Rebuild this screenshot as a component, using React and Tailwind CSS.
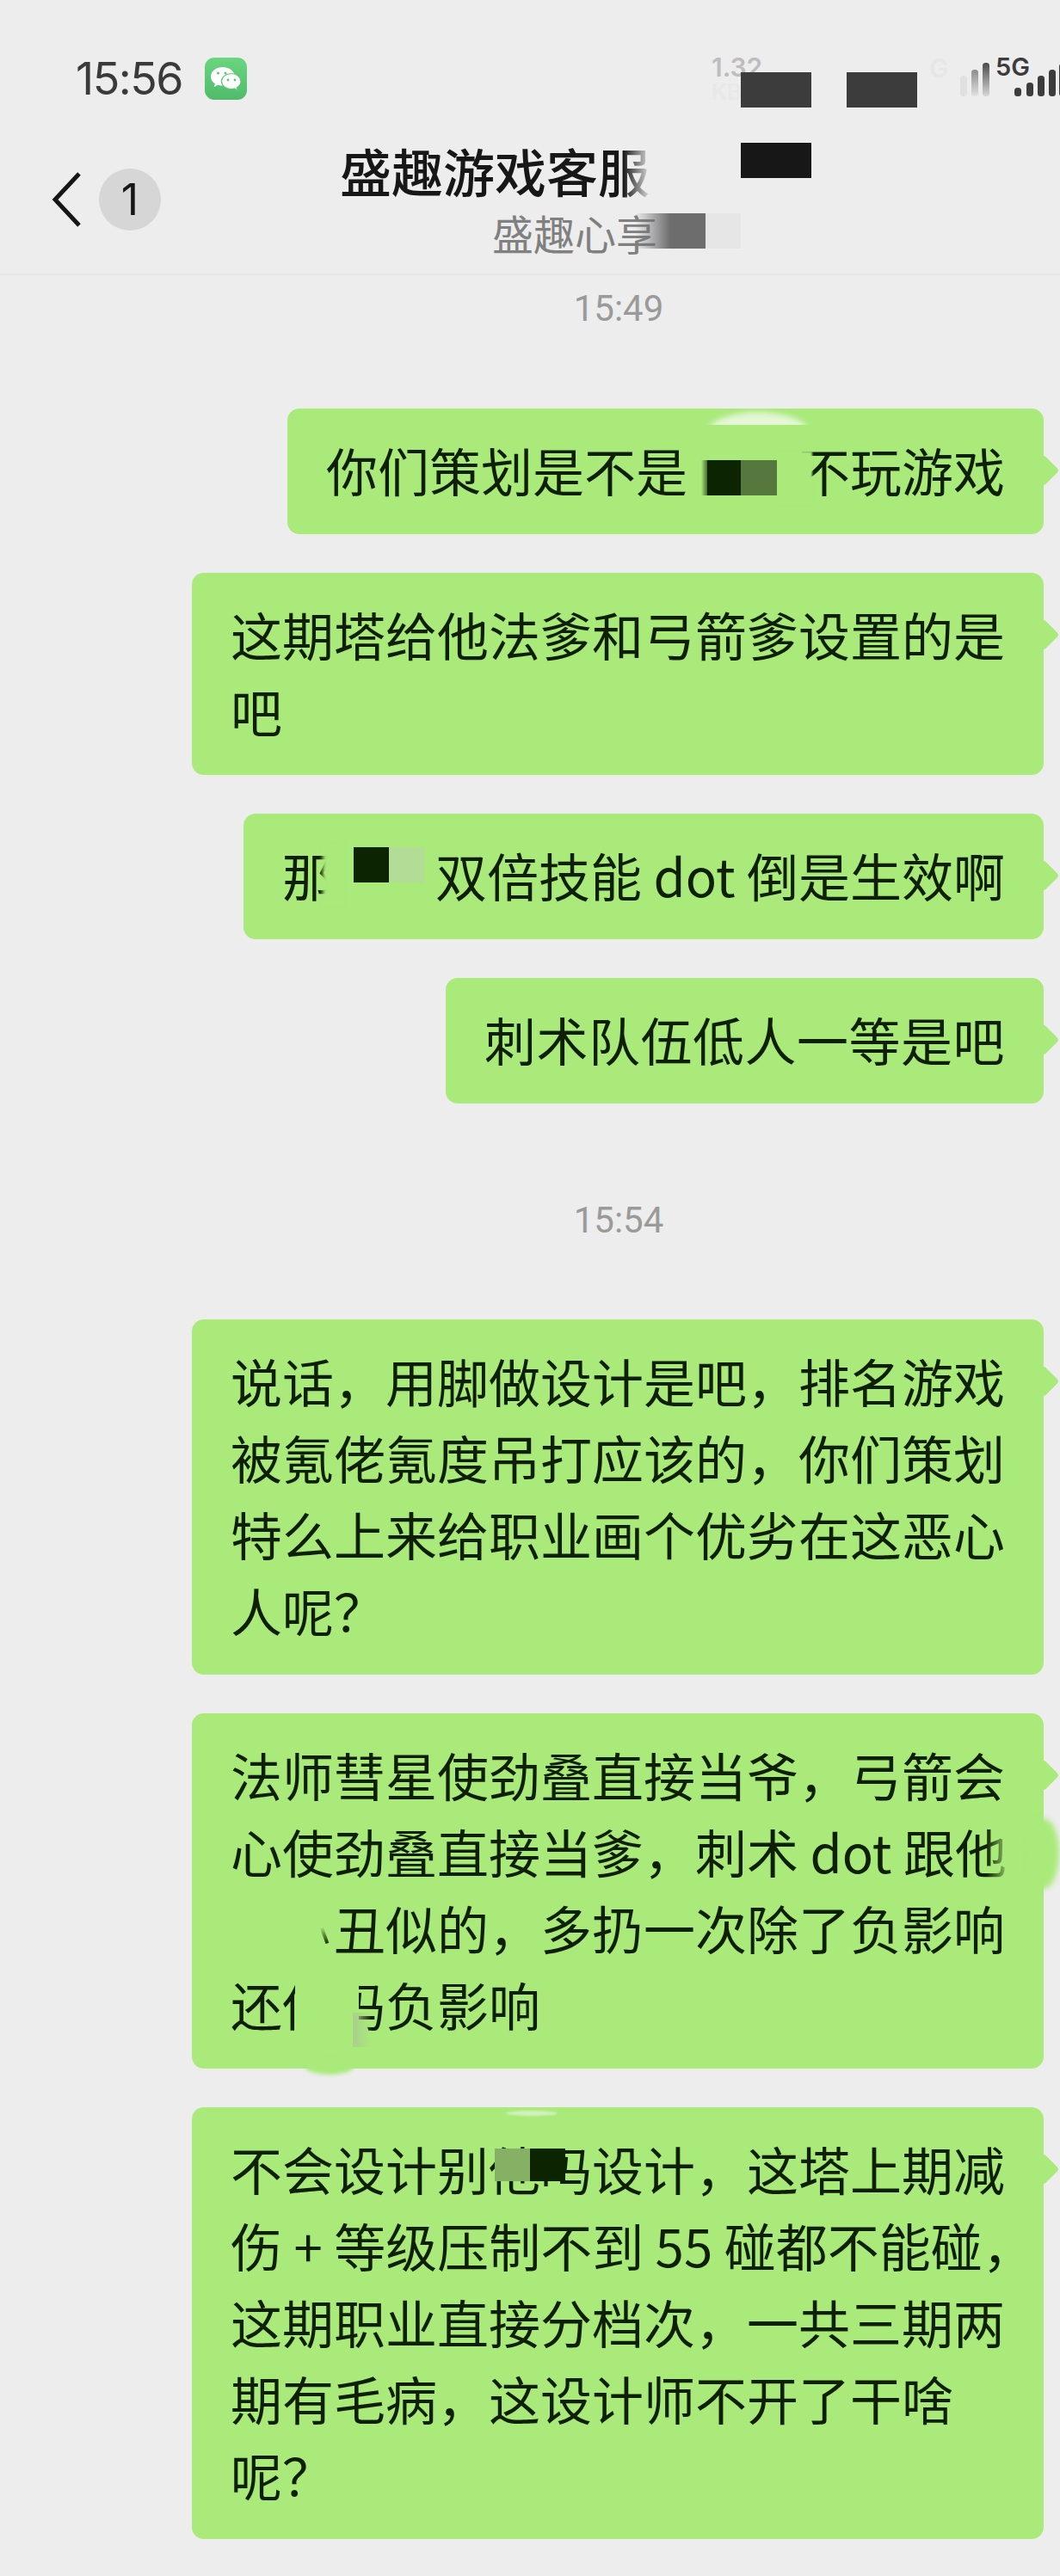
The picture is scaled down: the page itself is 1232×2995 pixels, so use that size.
import React from "react";

function Tail() {
  return <span className="absolute right-[-13px] top-[59px] w-[26px] h-[26px] rotate-45 rounded-[4px] bg-[#a9ea7a]" />;
}

function Bubble({ className = "", lines, children }) {
  return (
    <div className={"relative rounded-[14px] bg-[#a9ea7a] pt-[25.500px] pb-[31.500px] px-[45px] text-[60px] leading-[89px] text-[#0f1f02] " + className}>
      {lines.map((l, i) => (
        <div key={i} className="whitespace-nowrap">{l}</div>
      ))}
      {children}
      <Tail />
    </div>
  );
}

function Stamp({ className = "", children }) {
  return (
    <div className={"h-[60px] flex items-center justify-center pl-[206px] font-['Roboto',sans-serif] text-[42px] text-[#9a9a9a] " + className}>
      {children}
    </div>
  );
}

function WeChatIcon() {
  return (
    <div className="w-[49px] h-[49px] rounded-[11px] bg-gradient-to-b from-[#69d67f] to-[#50bb6b] ml-[26px] mt-[-2px]">
      <svg viewBox="0 0 49 49" className="w-[49px] h-[49px]">
        <path d="M21 11c-7.700 0-14 4.800-14 11 0 3.400 1.900 6.300 4.900 8.300l-1.200 3.900 4.500-2.500c1.800.5 3.700.8 5.800.8 7.700 0 14-4.800 14-10.500S28.700 11 21 11z" fill="#ffffff" />
        <path d="M31 18.500c-6.300 0-11.500 4-11.500 9s5.200 9 11.500 9c1.300 0 2.500-.2 3.600-.5l3.600 2-.9-3.200c2.900-1.600 4.700-4.300 4.700-7.300 0-5-5.200-9-11-9z" fill="#ffffff" stroke="#5cc875" strokeWidth="1.200" />
        <circle cx="15.500" cy="18" r="1.500" fill="#5cc875" />
        <circle cx="24" cy="18" r="1.500" fill="#5cc875" />
        <circle cx="27" cy="26" r="1.400" fill="#5cc875" />
        <circle cx="35" cy="26" r="1.400" fill="#5cc875" />
      </svg>
    </div>
  );
}

function Signal() {
  return (
    <svg viewBox="0 0 116 44" className="w-[116px] h-[44px] absolute left-[1116px] top-[70px]">
      <defs>
        <linearGradient id="fadeDown" x1="0" x2="0" y1="0" y2="1">
          <stop offset="0" stopColor="#4a4a4a" />
          <stop offset="1" stopColor="#d8d8d8" />
        </linearGradient>
        <linearGradient id="fadeMid" x1="0" x2="0" y1="0" y2="1">
          <stop offset="0" stopColor="#8c8c8c" />
          <stop offset="1" stopColor="#e2e2e2" />
        </linearGradient>
      </defs>
      <rect x="0" y="18" width="8" height="24" rx="3.500" fill="#e0e0e0" />
      <rect x="13" y="11" width="8" height="31" rx="3.500" fill="url(#fadeMid)" />
      <rect x="26" y="3" width="8" height="39" rx="3.500" fill="url(#fadeDown)" />
      <rect x="63" y="32" width="8" height="10" rx="3.500" fill="#3c3c3c" />
      <rect x="77" y="26" width="8" height="16" rx="3.500" fill="#3c3c3c" />
      <rect x="90" y="18" width="8" height="24" rx="3.500" fill="#3c3c3c" />
      <rect x="103" y="11" width="8" height="31" rx="3.500" fill="#3c3c3c" />
      <rect x="115" y="4" width="8" height="38" rx="3.500" fill="#3c3c3c" />
    </svg>
  );
}

function Header() {
  return (
    <div className="relative h-[320px] border-b-2 border-[#e6e6e6]">
      <div className="flex items-center pl-[88px] pt-[66px] h-[118px]">
        <span className="font-['Inter',sans-serif] text-[52px] leading-[52px] text-[#3a3a3a] tracking-[-1.500px]">15:56</span>
        <WeChatIcon />
      </div>
      <div className="flex items-start">
        <div className="flex items-center mt-[78px] pl-[58px]">
          <svg viewBox="0 0 40 66" className="w-[40px] h-[66px]">
            <path d="M34 3 L6 33 L34 63" fill="none" stroke="#161616" strokeWidth="5" />
          </svg>
          <div className="w-[72px] h-[72px] ml-[17px] rounded-full bg-[#d6d6d6] flex items-center justify-center font-['Inter',sans-serif] text-[50px] text-[#161616]">1</div>
        </div>
        <div className="ml-[208px] mt-[45px] flex flex-col">
          <div className="text-[60px] leading-[70px] font-medium text-[#171717]">盛趣游戏客服</div>
          <div className="pl-[177px] mt-[9px] text-[48px] leading-[56px] text-[#808080] whitespace-nowrap">盛趣心享</div>
        </div>
      </div>

      {/* privacy mosaic laid over the header */}
      <span className="absolute left-[724px] top-[165px] w-[34px] h-[68px] bg-gradient-to-r from-[#ededed00] to-[#ededed]" />
      <span className="absolute left-[738px] top-[248px] w-[82px] h-[41px] bg-gradient-to-r from-[#ededed00] via-[#6d6d6d] to-[#6d6d6d]" />
      <span className="absolute left-[820px] top-[248px] w-[41px] h-[41px] bg-[#e6e6e6]" />
      <span className="absolute left-[827px] top-[60px] font-['Inter',sans-serif] text-[30px] leading-[36px] font-semibold text-[#bdbdbd]">1.32</span>
      <span className="absolute left-[827px] top-[92px] font-['Inter',sans-serif] text-[26px] leading-[30px] font-semibold text-[#e8e8e8]">KB/s</span>
      <span className="absolute left-[861px] top-[84px] w-[82px] h-[41px] bg-[#3c3c3c]" />
      <span className="absolute left-[984px] top-[84px] w-[82px] h-[41px] bg-[#3c3c3c]" />
      <span className="absolute left-[861px] top-[166px] w-[82px] h-[41px] bg-[#171717]" />
      <span className="absolute left-[1080px] top-[61px] font-['Inter',sans-serif] text-[30px] leading-[36px] font-semibold text-[#e6e6e6]">G</span>
      <span className="absolute left-[1157px] top-[60px] font-['Inter',sans-serif] text-[29px] leading-[36px] font-semibold text-[#3c3c3c]">5G</span>
      <Signal />
    </div>
  );
}

export default function App() {
  return (
    <div className="w-[1232px] h-[2995px] overflow-hidden bg-[#ededed] flex flex-col font-['Noto_Sans_CJK_SC','Noto_Sans',sans-serif]">
      <Header />
      <Stamp className="mt-[8px] mb-[87px]">15:49</Stamp>

      <div className="flex flex-col items-end gap-[45px] pr-[19px]">
        <Bubble lines={[<>你们策划是不是<span className="inline-block w-[129px]" />不玩游戏</>]}>
          <span className="absolute left-[478px] top-0 w-[138px] h-[19px] overflow-hidden">
            <span className="block w-[120px] h-[50px] ml-[9px] mt-[4px] rounded-[50%] bg-[#e4f6d6] blur-[3px]" />
          </span>
          <span className="absolute left-[568px] top-[50px] w-[42px] h-[62px] bg-[#a9ea7a] blur-[1px]" />
          <span className="absolute left-[481px] top-[60px] w-[7px] h-[41px] bg-gradient-to-r from-[#a9ea7a] to-[#4c6c30]" />
          <span className="absolute left-[488px] top-[60px] w-[39px] h-[41px] bg-[#0d2400]" />
          <span className="absolute left-[527px] top-[60px] w-[42px] h-[41px] bg-[#56783f]" />
        </Bubble>

        <Bubble className="w-[990px]" lines={["这期塔给他法爹和弓箭爹设置的是", "吧"]} />

        <Bubble lines={[<>那<span className="inline-block w-[118px]" />双倍技能 dot 倒是生效啊</>]}>
          <span className="absolute left-[92px] top-[36px] w-[24px] h-[70px] bg-[#a9ea7a] blur-[2px]" />
          <span className="absolute left-[128px] top-[39px] w-[41px] h-[41px] bg-[#0d2400]" />
          <span className="absolute left-[169px] top-[39px] w-[41px] h-[41px] bg-[#b3dd96]" />
        </Bubble>

        <Bubble className="tracking-[0.500px]" lines={["刺术队伍低人一等是吧"]} />
      </div>

      <Stamp className="mt-[105px] mb-[86px]">15:54</Stamp>

      <div className="flex flex-col items-end gap-[45px] pr-[19px]">
        <Bubble className="w-[990px]" lines={["说话，用脚做设计是吧，排名游戏", "被氪佬氪度吊打应该的，你们策划", "特么上来给职业画个优劣在这恶心", "人呢？"]} />

        <Bubble className="w-[990px]" lines={["法师彗星使劲叠直接当爷，弓箭会", "心使劲叠直接当爹，刺术 dot 跟他", <><span className="inline-block w-[120px]" />丑似的，多扔一次除了负影响</>, "还他吗负影响"]}>
          <span className="absolute right-[-18px] top-[122px] w-[36px] h-[82px] rounded-[50%] bg-[#a9ea7a] blur-[3px]" />
          <span className="absolute left-[923px] top-[118px] w-[30px] h-[74px] bg-gradient-to-r from-[#a9ea7a00] to-[#a9ea7a]" />
          <span className="absolute left-[152px] top-[248px] w-[4px] h-[20px] -rotate-[20deg] bg-gradient-to-b from-[#a9ea7a] to-[#1c3308]" />
          <span className="absolute left-[120px] top-[298px] w-[74px] h-[78px] bg-[#a9ea7a]" />
          <span className="absolute left-[187px] top-[348px] w-[22px] h-[40px] bg-gradient-to-r from-[#a9d08a] to-[#a9ea7a00]" />
          <span className="absolute left-[132px] bottom-[-7px] w-[56px] h-[18px] rounded-[50%] bg-[#a9ea7a] blur-[2px]" />
        </Bubble>

        <Bubble className="w-[990px]" lines={["不会设计别他吗设计，这塔上期减", "伤 + 等级压制不到 55 碰都不能碰，", "这期职业直接分档次，一共三期两", "期有毛病，这设计师不开了干啥", "呢？"]}>
          <span className="absolute left-[365px] top-[4px] w-[60px] h-[6px] rounded-[50%] bg-[#d4f0bd] blur-[1px]" />
          <span className="absolute left-[352px] top-[48px] w-[41px] h-[38px] bg-[#86b063]" />
          <span className="absolute left-[393px] top-[48px] w-[41px] h-[38px] bg-[#0d2400]" />
        </Bubble>
      </div>
    </div>
  );
}
